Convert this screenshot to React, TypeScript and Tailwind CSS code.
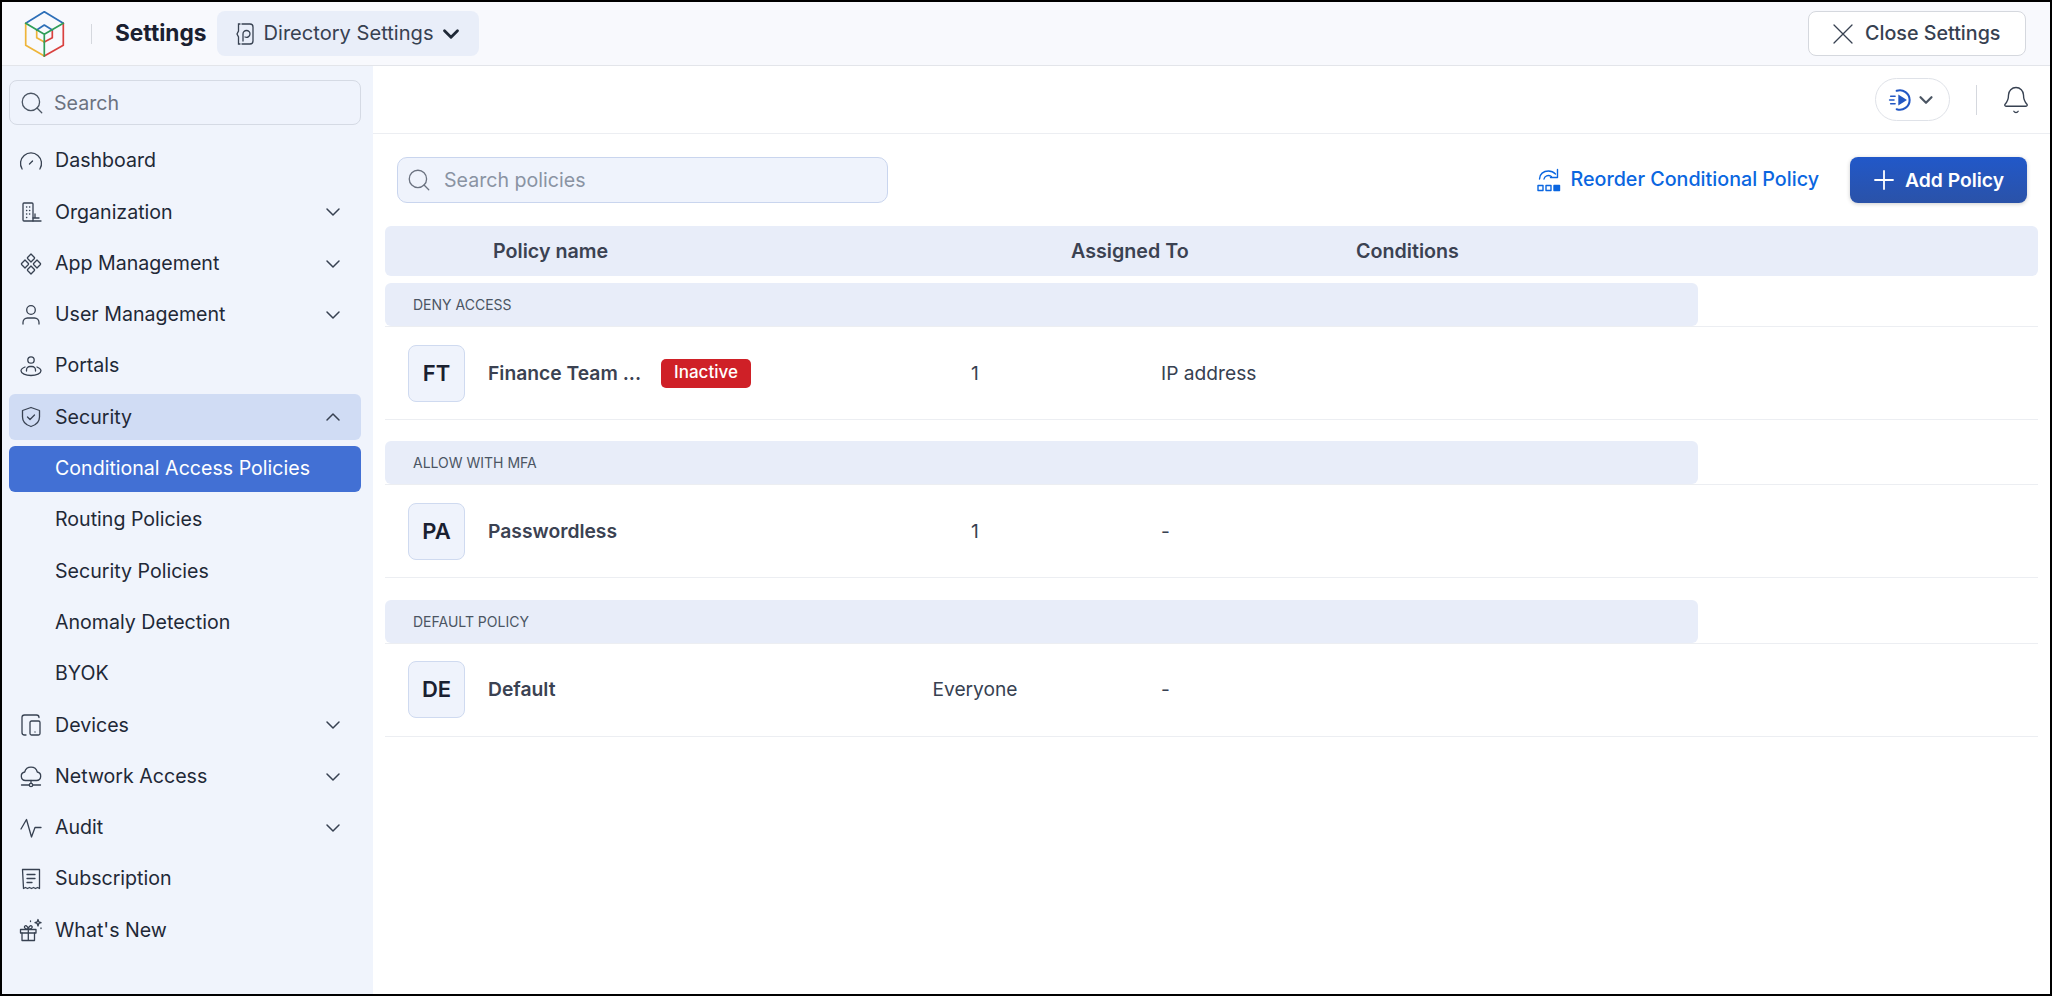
import React from "react";
import { ChevronDown, ChevronUp, Search, Bell } from "lucide-react";

const S = { fill: "none", stroke: "currentColor", strokeWidth: 1.3, strokeLinecap: "round" as const, strokeLinejoin: "round" as const };

function Ico({ children }: { children: React.ReactNode }) {
  return <svg width="24" height="24" viewBox="0 0 24 24" {...S} className="shrink-0 text-[#374151]">{children}</svg>;
}

const icons: Record<string, React.ReactNode> = {
  Dashboard: <Ico><path d="M3.100 20A10.500 10.500 0 1 1 20.900 20" /><path d="M10.500 15l3-3" /></Ico>,
  Organization: <Ico><path d="M14 21H5a1 1 0 0 1-1-1V4a1 1 0 0 1 1-1h8a1 1 0 0 1 1 1v17" /><path d="M7.500 7h.3M10.500 7h.3M7.500 10.500h.3M10.500 10.500h.3M7.500 14h.3M10.500 14h.3M7.500 17.500h.3" /><path d="M16 14v4M14 18h6M14 21h8" /></Ico>,
  "App Management": <Ico><path d="M12 2l3.200 3.200a1.200 1.200 0 0 1 0 1.600L12 10 8.800 6.800a1.200 1.200 0 0 1 0-1.600zM12 14l3.200 3.200a1.200 1.200 0 0 1 0 1.600L12 22l-3.200-3.200a1.200 1.200 0 0 1 0-1.600zM6 8l3.200 3.200a1.200 1.200 0 0 1 0 1.600L6 16l-3.200-3.200a1.200 1.200 0 0 1 0-1.600zM18 8l3.200 3.200a1.200 1.200 0 0 1 0 1.600L18 16l-3.200-3.200a1.200 1.200 0 0 1 0-1.600z" /></Ico>,
  "User Management": <Ico><circle cx="12" cy="7" r="4.300" /><path d="M4 21v-1.500a4.500 4.500 0 0 1 4.500-4.500h7a4.500 4.500 0 0 1 4.500 4.500V21" /></Ico>,
  Portals: <Ico><circle cx="12" cy="6" r="3.200" /><path d="M7.500 17v-1a3.500 3.500 0 0 1 3.500-3.500h2a3.500 3.500 0 0 1 3.500 3.500v1" /><path d="M6 13c-2.500 1-4 2.300-4 3.800 0 2.500 4.500 4.700 10 4.700s10-2.200 10-4.700c0-1.500-1.500-2.800-4-3.800" /></Ico>,
  Security: <Ico><path d="M12 2.500l8.500 3v6.500c0 5-3.500 8-8.500 9.500C7 20 3.500 17 3.500 12V5.500z" /><path d="M8.500 12l2.500 2.500 4.500-4.500" /></Ico>,
  Devices: <Ico><path d="M7 22H5.500A2.500 2.500 0 0 1 3 19.500v-15A2.500 2.500 0 0 1 5.500 2h12A2.500 2.500 0 0 1 20 4.500" /><rect x="11" y="8" width="10" height="14" rx="1.500" /><path d="M16 19h.01" /></Ico>,
  "Network Access": <Ico><path d="M6.500 15.500a4.300 4.300 0 0 1-.8-8.500 6.500 6.500 0 0 1 12.600 0 4.300 4.300 0 0 1-.8 8.500z" /><path d="M12 15.500v2.500M2.500 20h7.500M14 20h7.500" /><circle cx="12" cy="20" r="1.700" /></Ico>,
  Audit: <Ico><path d="M2 13l5.500-9.500L12.500 21 16 11.500h6" /></Ico>,
  Subscription: <Ico><path d="M3.500 2.500h17v19l-2-1-2 1-2-1-2 1-2-1-2 1-2-1-2 1z" /><path d="M8 7.500h8M8 11.500h8M8 15.500h5" /></Ico>,
  "What's New": <Ico><rect x="1.500" y="11.500" width="15.500" height="3.500" /><path d="M3 15v7.500h12.500V15M9.300 11.500v11M9.300 11.500C7 11.500 5 10 5.500 8.500s3.300-1 3.800 3c.5-4 3.300-4.500 3.800-3s-1.500 3-3.800 3" /><path d="M19 1.500l.8 2.400 2.200.8-2.200.8L19 8l-.8-2.500-2.200-.8 2.200-.8zM11.500 3v.5M22 10v.5" /></Ico>,
};

function NavItem({ label, chevron, active }: { label: string; chevron?: "up" | "down"; active?: boolean }) {
  return (
    <div className={`h-[46px] rounded-[6px] flex items-center pl-[10px] pr-[16px] gap-[12px] ${active ? "bg-[#d0dcf4]" : ""}`}>
      {icons[label]}
      <span className="flex-1 text-[19.6px] text-[#1f2937]">{label}</span>
      {chevron === "down" && <ChevronDown size={24} strokeWidth={1.5} className="text-[#374151]" />}
      {chevron === "up" && <ChevronUp size={24} strokeWidth={1.5} className="text-[#374151]" />}
    </div>
  );
}

function SubItem({ label, active }: { label: string; active?: boolean }) {
  return (
    <div className={`h-[46px] rounded-[6px] flex items-center pl-[46px] text-[19.6px] ${active ? "bg-[#4270d4] text-white" : "text-[#1f2937]"}`}>
      {label}
    </div>
  );
}

function Logo() {
  return (
    <svg width="42" height="46" viewBox="0 0 42 46" fill="none" strokeWidth="1.700" strokeLinejoin="round" strokeLinecap="round" className="shrink-0">
      <path d="M1.700 12.300L20.300.7l19 11.600" stroke="#2d6fb8" />
      <path d="M1.700 12.300v22L20.300 45" stroke="#eeb53a" />
      <path d="M20.300 45l19-10.700v-22" stroke="#d9413f" />
      <path d="M12.700 19v7.700l7.600 4.300" stroke="#eeb53a" />
      <path d="M20.300 31l8-4.300V19" stroke="#d9413f" />
      <path d="M12.700 19l7.600-5 8 5" stroke="#2d6fb8" />
      <path d="M1.700 12.300l18.600 11 19-11M20.300 23.300V45" stroke="#2f9e57" />
    </svg>
  );
}

function Group({ title, initials, name, badge, assigned, cond }: { title: string; initials: string; name: string; badge?: boolean; assigned: string; cond: string }) {
  return (
    <div className="mb-[21.4px]">
      <div className="w-[1313px] h-[43px] bg-[#e8edf9] rounded-[6px] flex items-center pl-[28px] text-[14px] text-[#4b5563]">{title}</div>
      <div className="h-[94px] border-t border-b border-[#eceef2] flex items-center">
        <div className="ml-[23px] w-[57px] h-[57px] rounded-[8px] border border-[#cfdaf0] bg-[#eff3fc] flex items-center justify-center text-[22px] font-semibold text-[#1a2030] shrink-0">{initials}</div>
        <div className="ml-[23px] w-[402px] flex items-center shrink-0">
          <span className="text-[19.3px] font-semibold text-[#3b4252]">{name}</span>
          {badge && <span className="ml-[20px] h-[29px] px-[13px] bg-[#cf2027] rounded-[5px] text-white text-[17px] font-medium flex items-center">Inactive</span>}
        </div>
        <div className="w-[170px] text-center text-[19.2px] text-[#374151] shrink-0">{assigned}</div>
        <span className="ml-[101px] text-[19.2px] text-[#374151]">{cond}</span>
      </div>
    </div>
  );
}

export default function App() {
  return (
    <div className="w-[2052px] h-[996px] border-2 border-black flex flex-col bg-white overflow-hidden" style={{ fontFamily: "Inter, 'Noto Sans', sans-serif" }}>
      <header className="h-[64px] shrink-0 bg-[#f8f9fd] border-b border-[#e3e5ea] flex items-center pl-[22px] pr-[24px]">
        <Logo />
        <div className="w-px h-[20px] bg-[#d5d8de] ml-[25px] mr-[23px]" />
        <span className="text-[22.7px] font-bold text-[#1a2030]">Settings</span>
        <div className="ml-[10px] h-[45px] w-[262px] rounded-[8px] bg-[#e9eef9] flex items-center pl-[19px] gap-[10px]">
          <svg width="18" height="22" viewBox="0 0 18 22" fill="none" stroke="#374151" strokeWidth="1.300" strokeLinecap="round" className="shrink-0">
            <path d="M6 1h8a3 3 0 0 1 3 3v14a3 3 0 0 1-3 3H6" />
            <path d="M4 1H2.500v7L1 11l1.500 3v7H4" />
            <path d="M7 18v-7a3.500 3.500 0 1 1 7 0 3.500 3.500 0 0 1-5 3" />
          </svg>
          <span className="text-[20.1px] text-[#374151]">Directory Settings</span>
          <ChevronDown size={26} strokeWidth={2.6} className="-ml-[6px] text-[#1f2937]" />
        </div>
        <div className="ml-auto h-[45px] w-[218px] rounded-[8px] bg-white border border-[#d5d8de] flex items-center pl-[24px] gap-[12px]">
          <svg width="20" height="20" viewBox="0 0 20 20" fill="none" stroke="#374151" strokeWidth="1.300" strokeLinecap="round" className="shrink-0">
            <path d="M1 1l18 18M19 1L1 19" />
          </svg>
          <span className="text-[19.7px] font-medium text-[#374151]">Close Settings</span>
        </div>
      </header>

      <div className="flex-1 flex min-h-0">
        <aside className="w-[371px] shrink-0 bg-[#f0f4fc] px-[7px] pt-[14px]">
          <div className="w-[352px] h-[45px] rounded-[8px] border border-[#d5dae4] bg-[#eff3fc] flex items-center pl-[9px] gap-[9px]">
            <Search size={26} strokeWidth={1.2} className="text-[#4b5563]" />
            <span className="text-[19.6px] pt-[2px] text-[#6b7280]">Search</span>
          </div>
          <div className="w-[352px] mt-[13px] flex flex-col gap-[5.3px]">
            <NavItem label="Dashboard" />
            <NavItem label="Organization" chevron="down" />
            <NavItem label="App Management" chevron="down" />
            <NavItem label="User Management" chevron="down" />
            <NavItem label="Portals" />
            <NavItem label="Security" chevron="up" active />
            <SubItem label="Conditional Access Policies" active />
            <SubItem label="Routing Policies" />
            <SubItem label="Security Policies" />
            <SubItem label="Anomaly Detection" />
            <SubItem label="BYOK" />
            <NavItem label="Devices" chevron="down" />
            <NavItem label="Network Access" chevron="down" />
            <NavItem label="Audit" chevron="down" />
            <NavItem label="Subscription" />
            <NavItem label="What's New" />
          </div>
        </aside>

        <main className="flex-1 min-w-0 flex flex-col">
          <div className="h-[68px] shrink-0 border-b border-[#eceef2] flex items-center justify-end pr-[19px]">
            <div className="h-[43px] w-[75px] rounded-full border border-[#dfe2e8] flex items-center justify-center gap-[1px]">
              <svg width="26" height="26" viewBox="0 0 24 24" fill="none" stroke="#2257c4" strokeWidth="1.900" strokeLinecap="round" className="shrink-0">
                <path d="M8 3.500a9 9 0 1 1 0 17" />
                <path d="M2.500 8.500h4M1.500 12h4M2.500 15.500h4" strokeWidth="1.500" />
                <path d="M9.500 7l8 5-8 5z" fill="#2257c4" stroke="none" />
              </svg>
              <ChevronDown size={22} strokeWidth={2.4} className="text-[#4b5563]" />
            </div>
            <div className="w-px h-[30px] bg-[#d5d8de] ml-[26px] mr-[24px]" />
            <Bell size={30} strokeWidth={1.1} className="text-[#374151]" />
          </div>

          <div className="pl-[12px] pr-[12px] flex-1">
            <div className="flex items-center h-[46px] mt-[23px] pl-[12px]">
              <div className="w-[491px] h-[46px] rounded-[10px] border border-[#c9d5ee] bg-[#eff3fc] flex items-center pl-[8px] gap-[12px]">
                <Search size={26} strokeWidth={1.2} className="text-[#6b7280]" />
                <span className="text-[19.6px] pt-[2px] text-[#8a93a3]">Search policies</span>
              </div>
              <div className="ml-auto flex items-center gap-[10px] text-[#0a66e0]">
                <svg width="24" height="24" viewBox="0 0 24 24" fill="none" stroke="#0a66e0" strokeWidth="1.400" strokeLinecap="round" strokeLinejoin="round" className="shrink-0">
                  <path d="M2.500 11c0-5 4-8 9-8 3 0 5 1 7 3" />
                  <path d="M20.500 1.500v8h-7" />
                  <path d="M7 11c.5-3 4-4.500 7.500-2.500" />
                  <rect x="1" y="17.500" width="5" height="5" />
                  <rect x="9" y="17.500" width="5" height="5" />
                  <rect x="17" y="17.500" width="5.500" height="5" fill="#0a66e0" />
                </svg>
                <span className="text-[19.7px] font-medium">Reorder Conditional Policy</span>
              </div>
              <div className="ml-[31px] mr-[11px] w-[177px] h-[46px] rounded-[8px] bg-gradient-to-b from-[#2158c9] to-[#2a52a8] shadow-[0_1px_4px_rgba(0,0,0,0.2)] flex items-center pl-[24px] gap-[11px] text-white">
                <svg width="20" height="20" viewBox="0 0 20 20" fill="none" stroke="white" strokeWidth="1.800" strokeLinecap="round" className="shrink-0">
                  <path d="M10 1v18M1 10h18" />
                </svg>
                <span className="text-[19.3px] font-semibold">Add Policy</span>
              </div>
            </div>

            <div className="mt-[23px] h-[50px] pt-[2px] bg-[#e8edf9] rounded-[6px] flex items-center text-[19.7px] font-semibold text-[#3b4252]">
              <span className="ml-[108px] w-[578px]">Policy name</span>
              <span className="w-[285px]">Assigned To</span>
              <span>Conditions</span>
            </div>

            <div className="mt-[7px]">
              <Group title="DENY ACCESS" initials="FT" name="Finance Team ..." badge assigned="1" cond="IP address" />
              <Group title="ALLOW WITH MFA" initials="PA" name="Passwordless" assigned="1" cond="-" />
              <Group title="DEFAULT POLICY" initials="DE" name="Default" assigned="Everyone" cond="-" />
            </div>
          </div>
        </main>
      </div>
    </div>
  );
}
